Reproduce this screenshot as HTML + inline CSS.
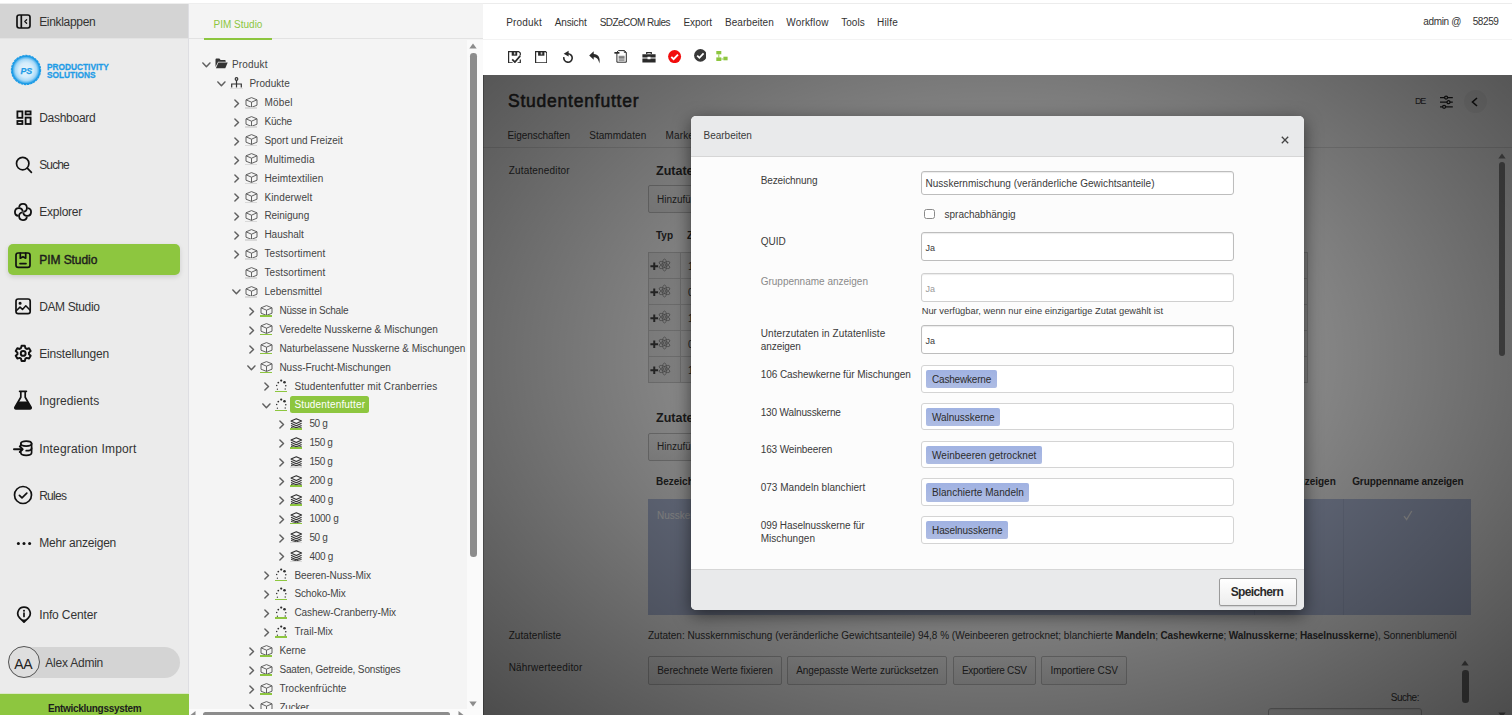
<!DOCTYPE html>
<html lang="de"><head><meta charset="utf-8"><title>PIM Studio</title>
<style>
html,body{margin:0;padding:0}
body{width:1512px;height:715px;overflow:hidden;background:#fff;font-family:"Liberation Sans",sans-serif;position:relative}
.t{position:absolute;white-space:nowrap}
.b{position:absolute;box-sizing:border-box}
.w{position:absolute;overflow:hidden}
.btn{position:absolute;box-sizing:border-box;border:1px solid #c6c6c6;border-radius:2px;background:linear-gradient(#ffffff,#f3f3f3)}
.inp{position:absolute;box-sizing:border-box;border:1px solid #bdbdbd;border-radius:3px;background:#fff;box-shadow:inset 0 1px 1px rgba(0,0,0,.08)}
.tag{position:absolute;box-sizing:border-box;border-radius:2px;background:linear-gradient(#a0b2e2,#aebce3)}
</style></head><body>

<div class="b" style="left:0px;top:3px;width:483px;height:1px;background:#eeeeee"></div>
<div class="w" id="sidebar" style="left:0;top:4px;width:188px;height:711px;background:#ebebeb">
<div class="b" style="left:0px;top:0px;width:188px;height:34px;background:#d4d4d4"></div>
<div class="b" style="left:0px;top:34px;width:188px;height:1px;background:#e3e3e3"></div>
</div>
<div class="b" style="left:188px;top:4px;width:1px;height:689px;background:#dedee2"></div>
<div class="b" style="left:189px;top:4px;width:2px;height:705px;background:#fafafa"></div>
<svg class="b" style="left:16px;top:13.5px;" width="15" height="15" viewBox="0 0 15 15"><rect x="1" y="1" width="13" height="13" rx="2.2" fill="none" stroke="#111" stroke-width="1.7"/><path d="M5.3 1v13" stroke="#111" stroke-width="1.7"/><path d="M10.6 5.8L8.8 7.5l1.8 1.7" fill="none" stroke="#111" stroke-width="1.3" stroke-linecap="round" stroke-linejoin="round"/></svg>
<div class="t" style="left:39.2px;top:12px;font-size:12px;line-height:20px;color:#333;letter-spacing:-0.32px;">Einklappen</div>
<svg class="b" style="left:10px;top:54px" width="32" height="32" viewBox="0 0 32 32">
<defs><radialGradient id="lg" cx="50%" cy="50%" r="50%"><stop offset="0" stop-color="#e8f5fd"/><stop offset="0.5" stop-color="#d3ecfb"/><stop offset="0.74" stop-color="#a5d8f7"/><stop offset="0.86" stop-color="#5ab8ef"/><stop offset="0.93" stop-color="#1f9ce6"/><stop offset="1" stop-color="#1f9ce6"/></radialGradient></defs>
<circle cx="16" cy="16" r="14.5" fill="url(#lg)" stroke="#1f9ce6" stroke-width="1.3" stroke-dasharray="2.4 0.8"/>
<text x="10.400" y="19.700" textLength="11.800" lengthAdjust="spacingAndGlyphs" font-family="Liberation Sans, sans-serif" font-size="9.900" font-weight="700" font-style="italic" fill="#1f9ce6" stroke="#1f9ce6" stroke-width=".25">PS</text>
</svg>
<div class="t" style="left:46.6px;top:59.5px;font-size:9.7px;line-height:14px;font-weight:700;color:#1f9ce6;-webkit-text-stroke:0.3px #1f9ce6;transform:scaleX(0.8585);transform-origin:0 0">PRODUCTIVITY</div>
<div class="t" style="left:46.6px;top:67.7px;font-size:9.7px;line-height:14px;font-weight:700;color:#1f9ce6;-webkit-text-stroke:0.3px #1f9ce6;transform:scaleX(0.8585);transform-origin:0 0">SOLUTIONS</div>
<div class="b" style="left:8px;top:243.5px;width:172px;height:31px;background:#8dc63f;border-radius:5px;box-shadow:0 2px 5px rgba(0,0,0,.13)"></div>
<div class="t" style="left:39.2px;top:108px;font-size:12px;line-height:20px;color:#333;letter-spacing:-0.276px;">Dashboard</div>
<svg class="b" style="left:15.5px;top:110.19999999999999px;" width="16" height="16" viewBox="0 0 16 16"><g fill="none" stroke="#111" stroke-width="1.8"><rect x="1.4" y="1.4" width="5" height="6.4"/><rect x="9.6" y="1.4" width="5" height="3"/><rect x="1.4" y="11" width="5" height="3"/><rect x="9.6" y="7.6" width="5" height="6.4"/></g></svg>
<div class="t" style="left:39.2px;top:155px;font-size:12px;line-height:20px;color:#333;letter-spacing:-0.856px;">Suche</div>
<svg class="b" style="left:15px;top:156.0px;" width="17.5" height="17.5" viewBox="0 0 17.5 17.5"><circle cx="7.7" cy="7.6" r="6.2" fill="none" stroke="#111" stroke-width="1.7" stroke-linecap="round" stroke-linejoin="round"/><path d="M12.3 12.2L16.4 16.3" fill="none" stroke="#111" stroke-width="1.7" stroke-linecap="round" stroke-linejoin="round"/></svg>
<div class="t" style="left:39.2px;top:202px;font-size:12px;line-height:20px;color:#333;letter-spacing:-0.226px;">Explorer</div>
<svg class="b" style="left:14.2px;top:202.6px;" width="18" height="18" viewBox="0 0 18 18"><g fill="none" stroke="#111" stroke-width="1.8" stroke-linecap="butt"><path transform="rotate(0 9 9)" d="M9.408 8.729A3.9 3.9 0 1 0 5.121 4.442"/><path transform="rotate(90 9 9)" d="M9.408 8.729A3.9 3.9 0 1 0 5.121 4.442"/><path transform="rotate(180 9 9)" d="M9.408 8.729A3.9 3.9 0 1 0 5.121 4.442"/><path transform="rotate(270 9 9)" d="M9.408 8.729A3.9 3.9 0 1 0 5.121 4.442"/></g></svg>
<div class="t" style="left:39.2px;top:250px;font-size:12px;line-height:20px;color:#1c1c1c;letter-spacing:-0.055px;-webkit-text-stroke:0.4px #1c1c1c;">PIM Studio</div>
<svg class="b" style="left:15.4px;top:251.60000000000002px;" width="16" height="17" viewBox="0 0 16 17"><g fill="none" stroke="#111" stroke-width="1.7" stroke-linecap="round" stroke-linejoin="round"><rect x="1" y="1" width="14" height="14.400" rx="2.200"/><path d="M5.300 1.200v5l2.700-1.500 2.700 1.500v-5"/><path d="M5 11.600h6"/></g></svg>
<div class="t" style="left:39.2px;top:297px;font-size:12px;line-height:20px;color:#333;letter-spacing:-0.37px;">DAM Studio</div>
<svg class="b" style="left:15.4px;top:298.20000000000005px;" width="16.4" height="17" viewBox="0 0 16.4 17"><g fill="none" stroke="#111" stroke-width="1.7" stroke-linecap="round" stroke-linejoin="round"><rect x="1" y="1" width="14.200" height="14.600" rx="2.200"/><path d="M1.300 12.800l3.700-3.700 2.500 2.300 3.300-3.700 4.400 4.600" stroke-width="1.500"/><circle cx="5.100" cy="5.200" r=".7" fill="#111"/></g></svg>
<div class="t" style="left:39.2px;top:344px;font-size:12px;line-height:20px;color:#333;letter-spacing:-0.171px;">Einstellungen</div>
<svg class="b" style="left:14.3px;top:344.0px;" width="18.4" height="18.4" viewBox="0 0 16 16"><g fill="none" stroke="#111" stroke-width="1.7" stroke-linecap="round" stroke-linejoin="round"><path d="M6.6 1.6h2.8l.5 2 1.2.7 2-.6 1.4 2.4-1.5 1.4v1.4l1.5 1.4-1.4 2.4-2-.6-1.2.7-.5 2H6.6l-.5-2-1.2-.7-2 .6-1.4-2.4L3 8.9V7.500L1.500 6.100l1.400-2.400 2 .6 1.200-.7z"/><circle cx="8" cy="8.2" r="2.1"/></g></svg>
<div class="t" style="left:39.2px;top:391px;font-size:12px;line-height:20px;color:#333;letter-spacing:0.063px;">Ingredients</div>
<svg class="b" style="left:13.4px;top:390.0px;" width="20" height="20" viewBox="0 0 20 20"><path d="M6.6 1.3h6.8M7.8 1.3v6L2 17.2c-.5.9 0 1.700 1 1.700h14c1 0 1.500-.8 1-1.700L12.200 7.300v-6" fill="none" stroke="#111" stroke-width="1.7" stroke-linecap="round" stroke-linejoin="round"/><path d="M5.300 11.400h9.400l3.600 6.600-.6.900H2.300l-.6-.9z" fill="#111"/></svg>
<div class="t" style="left:39.2px;top:439px;font-size:12px;line-height:20px;color:#333;letter-spacing:0.185px;">Integration Import</div>
<svg class="b" style="left:13.4px;top:440.1px;" width="20" height="16.5" viewBox="0 0 20 16.5"><g fill="none" stroke="#111" stroke-width="1.7" stroke-linecap="round" stroke-linejoin="round"><ellipse cx="13.2" cy="3.6" rx="5.400" ry="2.500"/><path d="M7.800 3.600v2.200M7.800 12.200v.6c0 1.400 2.400 2.500 5.400 2.500s5.400-1.100 5.400-2.500V3.600"/><path d="M18.600 8.200c0 1.400-2.400 2.500-5.400 2.500"/><path d="M1 9.200h8.200" stroke-width="2"/><path d="M6.800 6.400l2.800 2.800-2.800 2.800" stroke-width="2"/></g></svg>
<div class="t" style="left:39.2px;top:486px;font-size:12px;line-height:20px;color:#333;letter-spacing:-0.745px;">Rules</div>
<svg class="b" style="left:13.4px;top:485.0px;" width="20" height="20" viewBox="0 0 20 20"><g fill="none" stroke="#111" stroke-width="1.7" stroke-linecap="round" stroke-linejoin="round"><circle cx="10" cy="10" r="8.500"/><path d="M6.400 10.300l2.600 2.600 4.800-4.800"/></g></svg>
<div class="t" style="left:39.2px;top:533px;font-size:12px;line-height:20px;color:#333;letter-spacing:-0.19px;">Mehr anzeigen</div>
<svg class="b" style="left:15.5px;top:535.2px;" width="16" height="16" viewBox="0 0 16 16"><g fill="#111"><circle cx="2.400" cy="8.600" r="1.500"/><circle cx="8" cy="8.600" r="1.500"/><circle cx="13.600" cy="8.600" r="1.500"/></g></svg>
<svg class="b" style="left:15.5px;top:606px;" width="16" height="18" viewBox="0 0 16 18"><path d="M8 1.200a6.200 6.200 0 0 1 4.400 10.600L8 16.200l-4.400-4.400A6.200 6.200 0 0 1 8 1.200z" fill="none" stroke="#111" stroke-width="1.7" stroke-linecap="round" stroke-linejoin="round"/><path d="M8 7v3.400" fill="none" stroke="#111" stroke-width="1.7" stroke-linecap="round" stroke-linejoin="round"/><circle cx="8" cy="4.700" r="1" fill="#111"/><path d="M5.400 13.600h5.200L8 16.200z" fill="#111"/></svg>
<div class="t" style="left:39.2px;top:605px;font-size:12px;line-height:20px;color:#333;letter-spacing:-0.137px;">Info Center</div>
<div class="b" style="left:8px;top:646.5px;width:172px;height:31px;background:#d4d4d4;border-radius:16px"></div>
<div class="b" style="left:8px;top:646px;width:32px;height:32px;border:1px solid #555;border-radius:16px;background:#dedede"></div>
<div class="t" style="left:14.3px;top:654px;font-size:14px;line-height:20px;color:#222;letter-spacing:-0.276px;">AA</div>
<div class="t" style="left:45.3px;top:653px;font-size:12px;line-height:20px;color:#333;letter-spacing:-0.226px;">Alex Admin</div>
<div class="b" style="left:0px;top:693px;width:189px;height:1px;background:#dbe8c8"></div>
<div class="b" style="left:0px;top:694px;width:189px;height:21px;background:#8dc63f"></div>
<div class="t" style="left:47.9px;top:699px;font-size:10px;line-height:20px;color:#1c1c1c;font-weight:700;letter-spacing:-0.307px;">Entwicklungssystem</div>
<div class="w" id="treepanel" style="left:189px;top:4px;width:294px;height:711px;background:#f4f4f4">
</div>
<div class="b" style="left:189px;top:4px;width:294px;height:35.4px;background:#f4f4f4;border-bottom:1px solid #e2e2e2"></div>
<div class="t" style="left:213.5px;top:15px;font-size:10px;line-height:20px;color:#8dc63f;">PIM Studio</div>
<div class="b" style="left:203.8px;top:37.9px;width:68.2px;height:1.8px;background:#8dc63f"></div>
<svg class="b" style="left:202.0px;top:62.45px;" width="10" height="6.5" viewBox="0 0 10 6.5"><path d="M.9 .9L4.400 4.700 7.900 .9" fill="none" stroke="#606060" stroke-width="1.45" stroke-linecap="round" stroke-linejoin="round"/></svg>
<svg class="b" style="left:214.8px;top:58.24999999999999px;" width="13" height="11" viewBox="0 0 13 11"><path d="M.5 1.500c0-.5.400-.9.900-.9h3l1.200 1.300h4.200c.5 0 .9.400.9.900v.9H3.100L.5 9z" fill="#333"/><path d="M3.400 4.400h9.300L10.300 10.200H.9z" fill="#333"/></svg>
<div class="t" style="left:232.0px;top:55px;font-size:10px;line-height:20px;color:#444;letter-spacing:0.173px;">Produkt</div>
<svg class="b" style="left:217.0px;top:81.35000000000001px;" width="10" height="6.5" viewBox="0 0 10 6.5"><path d="M.9 .9L4.400 4.700 7.900 .9" fill="none" stroke="#606060" stroke-width="1.45" stroke-linecap="round" stroke-linejoin="round"/></svg>
<svg class="b" style="left:229.8px;top:77.15px;" width="13" height="12" viewBox="0 0 13 12"><g fill="none" stroke="#333" stroke-width="1.200"><circle cx="6.500" cy="2" r="1.300"/><path d="M6.500 3.400v7M1.700 10.600V7h9.600v3.600"/></g><path d="M0 11.400h13" stroke="#ddd" stroke-width="1"/></svg>
<div class="t" style="left:249.4px;top:74px;font-size:10px;line-height:20px;color:#444;letter-spacing:0.039px;">Produkte</div>
<svg class="b" style="left:234.3px;top:98.85px;" width="6.5" height="10" viewBox="0 0 6.5 10"><path d="M.9 .9L4.500 4.500 .9 8.100" fill="none" stroke="#606060" stroke-width="1.45" stroke-linecap="round" stroke-linejoin="round"/></svg>
<svg class="b" style="left:244.8px;top:96.64999999999999px;" width="13" height="11" viewBox="0 0 13 11"><g fill="none" stroke="#5a5a5a" stroke-width=".95" stroke-linejoin="round"><path d="M6.500 .6L12 2.800v5.400L6.500 10.400 1 8.200V2.800z" /><path d="M1 2.800l5.500 2.400L12 2.800M6.500 5.200v5.200"/></g></svg>
<div class="b" style="left:244.8px;top:107.1px;width:12.4px;height:1.6px;background:#d9d9d9"></div>
<div class="t" style="left:264.4px;top:93px;font-size:10px;line-height:20px;color:#444;letter-spacing:0.191px;">Möbel</div>
<svg class="b" style="left:234.3px;top:117.74999999999999px;" width="6.5" height="10" viewBox="0 0 6.5 10"><path d="M.9 .9L4.500 4.500 .9 8.100" fill="none" stroke="#606060" stroke-width="1.45" stroke-linecap="round" stroke-linejoin="round"/></svg>
<svg class="b" style="left:244.8px;top:115.54999999999998px;" width="13" height="11" viewBox="0 0 13 11"><g fill="none" stroke="#5a5a5a" stroke-width=".95" stroke-linejoin="round"><path d="M6.500 .6L12 2.800v5.400L6.500 10.400 1 8.200V2.800z" /><path d="M1 2.800l5.500 2.400L12 2.800M6.500 5.200v5.200"/></g></svg>
<div class="b" style="left:244.8px;top:125.99999999999999px;width:12.4px;height:1.6px;background:#d9d9d9"></div>
<div class="t" style="left:264.4px;top:112px;font-size:10px;line-height:20px;color:#444;letter-spacing:-0.164px;">Küche</div>
<svg class="b" style="left:234.3px;top:136.64999999999998px;" width="6.5" height="10" viewBox="0 0 6.5 10"><path d="M.9 .9L4.500 4.500 .9 8.100" fill="none" stroke="#606060" stroke-width="1.45" stroke-linecap="round" stroke-linejoin="round"/></svg>
<svg class="b" style="left:244.8px;top:134.45px;" width="13" height="11" viewBox="0 0 13 11"><g fill="none" stroke="#5a5a5a" stroke-width=".95" stroke-linejoin="round"><path d="M6.500 .6L12 2.800v5.400L6.500 10.400 1 8.200V2.800z" /><path d="M1 2.800l5.500 2.400L12 2.800M6.500 5.200v5.200"/></g></svg>
<div class="b" style="left:244.8px;top:144.89999999999998px;width:12.4px;height:1.6px;background:#d9d9d9"></div>
<div class="t" style="left:264.4px;top:131px;font-size:10px;line-height:20px;color:#444;letter-spacing:-0.031px;">Sport und Freizeit</div>
<svg class="b" style="left:234.3px;top:155.54999999999998px;" width="6.5" height="10" viewBox="0 0 6.5 10"><path d="M.9 .9L4.500 4.500 .9 8.100" fill="none" stroke="#606060" stroke-width="1.45" stroke-linecap="round" stroke-linejoin="round"/></svg>
<svg class="b" style="left:244.8px;top:153.35px;" width="13" height="11" viewBox="0 0 13 11"><g fill="none" stroke="#5a5a5a" stroke-width=".95" stroke-linejoin="round"><path d="M6.500 .6L12 2.800v5.400L6.500 10.400 1 8.200V2.800z" /><path d="M1 2.800l5.500 2.400L12 2.800M6.500 5.200v5.200"/></g></svg>
<div class="b" style="left:244.8px;top:163.79999999999998px;width:12.4px;height:1.6px;background:#d9d9d9"></div>
<div class="t" style="left:264.4px;top:150px;font-size:10px;line-height:20px;color:#444;letter-spacing:0.206px;">Multimedia</div>
<svg class="b" style="left:234.3px;top:174.45px;" width="6.5" height="10" viewBox="0 0 6.5 10"><path d="M.9 .9L4.500 4.500 .9 8.100" fill="none" stroke="#606060" stroke-width="1.45" stroke-linecap="round" stroke-linejoin="round"/></svg>
<svg class="b" style="left:244.8px;top:172.25px;" width="13" height="11" viewBox="0 0 13 11"><g fill="none" stroke="#5a5a5a" stroke-width=".95" stroke-linejoin="round"><path d="M6.500 .6L12 2.800v5.400L6.500 10.400 1 8.200V2.800z" /><path d="M1 2.800l5.500 2.400L12 2.800M6.500 5.200v5.200"/></g></svg>
<div class="b" style="left:244.8px;top:182.7px;width:12.4px;height:1.6px;background:#d9d9d9"></div>
<div class="t" style="left:264.4px;top:169px;font-size:10px;line-height:20px;color:#444;letter-spacing:0.138px;">Heimtextilien</div>
<svg class="b" style="left:234.3px;top:193.34999999999997px;" width="6.5" height="10" viewBox="0 0 6.5 10"><path d="M.9 .9L4.500 4.500 .9 8.100" fill="none" stroke="#606060" stroke-width="1.45" stroke-linecap="round" stroke-linejoin="round"/></svg>
<svg class="b" style="left:244.8px;top:191.14999999999998px;" width="13" height="11" viewBox="0 0 13 11"><g fill="none" stroke="#5a5a5a" stroke-width=".95" stroke-linejoin="round"><path d="M6.500 .6L12 2.800v5.400L6.500 10.400 1 8.200V2.800z" /><path d="M1 2.800l5.500 2.400L12 2.800M6.500 5.200v5.200"/></g></svg>
<div class="b" style="left:244.8px;top:201.59999999999997px;width:12.4px;height:1.6px;background:#d9d9d9"></div>
<div class="t" style="left:264.4px;top:188px;font-size:10px;line-height:20px;color:#444;letter-spacing:0.123px;">Kinderwelt</div>
<svg class="b" style="left:234.3px;top:212.24999999999997px;" width="6.5" height="10" viewBox="0 0 6.5 10"><path d="M.9 .9L4.500 4.500 .9 8.100" fill="none" stroke="#606060" stroke-width="1.45" stroke-linecap="round" stroke-linejoin="round"/></svg>
<svg class="b" style="left:244.8px;top:210.04999999999998px;" width="13" height="11" viewBox="0 0 13 11"><g fill="none" stroke="#5a5a5a" stroke-width=".95" stroke-linejoin="round"><path d="M6.500 .6L12 2.800v5.400L6.500 10.400 1 8.200V2.800z" /><path d="M1 2.800l5.500 2.400L12 2.800M6.500 5.200v5.200"/></g></svg>
<div class="b" style="left:244.8px;top:220.49999999999997px;width:12.4px;height:1.6px;background:#d9d9d9"></div>
<div class="t" style="left:264.4px;top:206px;font-size:10px;line-height:20px;color:#444;letter-spacing:-0.029px;">Reinigung</div>
<svg class="b" style="left:234.3px;top:231.14999999999998px;" width="6.5" height="10" viewBox="0 0 6.5 10"><path d="M.9 .9L4.500 4.500 .9 8.100" fill="none" stroke="#606060" stroke-width="1.45" stroke-linecap="round" stroke-linejoin="round"/></svg>
<svg class="b" style="left:244.8px;top:228.95px;" width="13" height="11" viewBox="0 0 13 11"><g fill="none" stroke="#5a5a5a" stroke-width=".95" stroke-linejoin="round"><path d="M6.500 .6L12 2.800v5.400L6.500 10.400 1 8.200V2.800z" /><path d="M1 2.800l5.500 2.400L12 2.800M6.500 5.200v5.200"/></g></svg>
<div class="b" style="left:244.8px;top:239.39999999999998px;width:12.4px;height:1.6px;background:#d9d9d9"></div>
<div class="t" style="left:264.4px;top:225px;font-size:10px;line-height:20px;color:#444;letter-spacing:-0.024px;">Haushalt</div>
<svg class="b" style="left:234.3px;top:250.05px;" width="6.5" height="10" viewBox="0 0 6.5 10"><path d="M.9 .9L4.500 4.500 .9 8.100" fill="none" stroke="#606060" stroke-width="1.45" stroke-linecap="round" stroke-linejoin="round"/></svg>
<svg class="b" style="left:244.8px;top:247.85000000000002px;" width="13" height="11" viewBox="0 0 13 11"><g fill="none" stroke="#5a5a5a" stroke-width=".95" stroke-linejoin="round"><path d="M6.500 .6L12 2.800v5.400L6.500 10.400 1 8.200V2.800z" /><path d="M1 2.800l5.500 2.400L12 2.800M6.500 5.200v5.200"/></g></svg>
<div class="b" style="left:244.8px;top:258.3px;width:12.4px;height:1.6px;background:#d9d9d9"></div>
<div class="t" style="left:264.4px;top:244px;font-size:10px;line-height:20px;color:#444;letter-spacing:0.12px;">Testsortiment</div>
<svg class="b" style="left:244.8px;top:266.75px;" width="13" height="11" viewBox="0 0 13 11"><g fill="none" stroke="#5a5a5a" stroke-width=".95" stroke-linejoin="round"><path d="M6.500 .6L12 2.800v5.400L6.500 10.400 1 8.200V2.800z" /><path d="M1 2.800l5.500 2.400L12 2.800M6.500 5.200v5.200"/></g></svg>
<div class="b" style="left:244.8px;top:277.2px;width:12.4px;height:1.6px;background:#d9d9d9"></div>
<div class="t" style="left:264.4px;top:263px;font-size:10px;line-height:20px;color:#444;letter-spacing:0.12px;">Testsortiment</div>
<svg class="b" style="left:232.0px;top:289.24999999999994px;" width="10" height="6.5" viewBox="0 0 10 6.5"><path d="M.9 .9L4.400 4.700 7.900 .9" fill="none" stroke="#606060" stroke-width="1.45" stroke-linecap="round" stroke-linejoin="round"/></svg>
<svg class="b" style="left:244.8px;top:285.65px;" width="13" height="11" viewBox="0 0 13 11"><g fill="none" stroke="#5a5a5a" stroke-width=".95" stroke-linejoin="round"><path d="M6.500 .6L12 2.800v5.400L6.500 10.400 1 8.200V2.800z" /><path d="M1 2.800l5.500 2.400L12 2.800M6.500 5.200v5.200"/></g></svg>
<div class="b" style="left:244.8px;top:296.09999999999997px;width:12.4px;height:1.6px;background:#d9d9d9"></div>
<div class="t" style="left:264.4px;top:282px;font-size:10px;line-height:20px;color:#444;letter-spacing:0.082px;">Lebensmittel</div>
<svg class="b" style="left:249.3px;top:306.74999999999994px;" width="6.5" height="10" viewBox="0 0 6.5 10"><path d="M.9 .9L4.500 4.500 .9 8.100" fill="none" stroke="#606060" stroke-width="1.45" stroke-linecap="round" stroke-linejoin="round"/></svg>
<svg class="b" style="left:259.8px;top:304.54999999999995px;" width="13" height="11" viewBox="0 0 13 11"><g fill="none" stroke="#5a5a5a" stroke-width=".95" stroke-linejoin="round"><path d="M6.500 .6L12 2.800v5.400L6.500 10.400 1 8.200V2.800z" /><path d="M1 2.800l5.500 2.400L12 2.800M6.500 5.200v5.200"/></g></svg>
<div class="b" style="left:259.8px;top:314.99999999999994px;width:12.4px;height:1.6px;background:#8dc63f"></div>
<div class="t" style="left:279.4px;top:301px;font-size:10px;line-height:20px;color:#444;letter-spacing:-0.226px;">Nüsse in Schale</div>
<svg class="b" style="left:249.3px;top:325.6499999999999px;" width="6.5" height="10" viewBox="0 0 6.5 10"><path d="M.9 .9L4.500 4.500 .9 8.100" fill="none" stroke="#606060" stroke-width="1.45" stroke-linecap="round" stroke-linejoin="round"/></svg>
<svg class="b" style="left:259.8px;top:323.44999999999993px;" width="13" height="11" viewBox="0 0 13 11"><g fill="none" stroke="#5a5a5a" stroke-width=".95" stroke-linejoin="round"><path d="M6.500 .6L12 2.800v5.400L6.500 10.400 1 8.200V2.800z" /><path d="M1 2.800l5.500 2.400L12 2.800M6.500 5.200v5.200"/></g></svg>
<div class="b" style="left:259.8px;top:333.8999999999999px;width:12.4px;height:1.6px;background:#8dc63f"></div>
<div class="t" style="left:279.4px;top:320px;font-size:10px;line-height:20px;color:#444;letter-spacing:-0.019px;">Veredelte Nusskerne &amp; Mischungen</div>
<svg class="b" style="left:249.3px;top:344.55px;" width="6.5" height="10" viewBox="0 0 6.5 10"><path d="M.9 .9L4.500 4.500 .9 8.100" fill="none" stroke="#606060" stroke-width="1.45" stroke-linecap="round" stroke-linejoin="round"/></svg>
<svg class="b" style="left:259.8px;top:342.35px;" width="13" height="11" viewBox="0 0 13 11"><g fill="none" stroke="#5a5a5a" stroke-width=".95" stroke-linejoin="round"><path d="M6.500 .6L12 2.800v5.400L6.500 10.400 1 8.200V2.800z" /><path d="M1 2.800l5.500 2.400L12 2.800M6.500 5.200v5.200"/></g></svg>
<div class="b" style="left:259.8px;top:352.8px;width:12.4px;height:1.6px;background:#8dc63f"></div>
<div class="t" style="left:279.4px;top:339px;font-size:10px;line-height:20px;color:#444;letter-spacing:-0.021px;">Naturbelassene Nusskerne &amp; Mischungen</div>
<svg class="b" style="left:247.0px;top:364.84999999999997px;" width="10" height="6.5" viewBox="0 0 10 6.5"><path d="M.9 .9L4.400 4.700 7.900 .9" fill="none" stroke="#606060" stroke-width="1.45" stroke-linecap="round" stroke-linejoin="round"/></svg>
<svg class="b" style="left:259.8px;top:361.25px;" width="13" height="11" viewBox="0 0 13 11"><g fill="none" stroke="#5a5a5a" stroke-width=".95" stroke-linejoin="round"><path d="M6.500 .6L12 2.800v5.400L6.500 10.400 1 8.200V2.800z" /><path d="M1 2.800l5.500 2.400L12 2.800M6.500 5.200v5.200"/></g></svg>
<div class="b" style="left:259.8px;top:371.7px;width:12.4px;height:1.6px;background:#8dc63f"></div>
<div class="t" style="left:279.4px;top:358px;font-size:10px;line-height:20px;color:#444;letter-spacing:-0.01px;">Nuss-Frucht-Mischungen</div>
<svg class="b" style="left:264.3px;top:382.34999999999997px;" width="6.5" height="10" viewBox="0 0 6.5 10"><path d="M.9 .9L4.500 4.500 .9 8.100" fill="none" stroke="#606060" stroke-width="1.45" stroke-linecap="round" stroke-linejoin="round"/></svg>
<svg class="b" style="left:274.8px;top:379.15px;" width="13" height="12" viewBox="0 0 13 12"><g fill="#2e2e2e"><circle cx="6.200" cy="1.600" r="1.100"/><circle cx="9.500" cy="3.300" r="1.300"/><circle cx="3.300" cy="3.600" r=".9"/><circle cx="10.800" cy="6.800" r=".8"/><circle cx="1.700" cy="6.600" r=".75"/><circle cx="10.200" cy="10" r=".65"/><circle cx="2.400" cy="10.200" r=".65"/></g></svg>
<div class="b" style="left:274.8px;top:390.59999999999997px;width:12.4px;height:1.6px;background:#8dc63f"></div>
<div class="t" style="left:294.4px;top:377px;font-size:10px;line-height:20px;color:#444;letter-spacing:0.11px;">Studentenfutter mit Cranberries</div>
<svg class="b" style="left:262.0px;top:402.6499999999999px;" width="10" height="6.5" viewBox="0 0 10 6.5"><path d="M.9 .9L4.400 4.700 7.900 .9" fill="none" stroke="#606060" stroke-width="1.45" stroke-linecap="round" stroke-linejoin="round"/></svg>
<svg class="b" style="left:274.8px;top:398.04999999999995px;" width="13" height="12" viewBox="0 0 13 12"><g fill="#2e2e2e"><circle cx="6.200" cy="1.600" r="1.100"/><circle cx="9.500" cy="3.300" r="1.300"/><circle cx="3.300" cy="3.600" r=".9"/><circle cx="10.800" cy="6.800" r=".8"/><circle cx="1.700" cy="6.600" r=".75"/><circle cx="10.200" cy="10" r=".65"/><circle cx="2.400" cy="10.200" r=".65"/></g></svg>
<div class="b" style="left:274.8px;top:409.49999999999994px;width:12.4px;height:1.6px;background:#8dc63f"></div>
<div class="b" style="left:290.4px;top:396.3px;width:78.8px;height:16.4px;background:#8dc63f;border-radius:2.500px"></div>
<div class="t" style="left:294.4px;top:395px;font-size:10px;line-height:20px;color:#fff;letter-spacing:0.158px;">Studentenfutter</div>
<svg class="b" style="left:279.3px;top:420.1499999999999px;" width="6.5" height="10" viewBox="0 0 6.5 10"><path d="M.9 .9L4.500 4.500 .9 8.100" fill="none" stroke="#606060" stroke-width="1.45" stroke-linecap="round" stroke-linejoin="round"/></svg>
<svg class="b" style="left:289.8px;top:417.94999999999993px;" width="13" height="11" viewBox="0 0 13 11"><g fill="none" stroke="#2e2e2e" stroke-width="1.050" stroke-linejoin="round"><path d="M6.300 .7L11.600 3.100 6.300 5.500 1 3.100z"/><path d="M1 5.300l5.300 2.400 5.300-2.400"/><path d="M1 7.400l5.300 2.400 5.300-2.400"/><path d="M1 9.400l5.300 1.400 5.300-1.400" stroke-width=".9"/></g></svg>
<div class="b" style="left:289.8px;top:428.3999999999999px;width:12.4px;height:1.6px;background:#8dc63f"></div>
<div class="t" style="left:309.4px;top:414px;font-size:10px;line-height:20px;color:#444;letter-spacing:-0.354px;">50 g</div>
<svg class="b" style="left:279.3px;top:439.05px;" width="6.5" height="10" viewBox="0 0 6.5 10"><path d="M.9 .9L4.500 4.500 .9 8.100" fill="none" stroke="#606060" stroke-width="1.45" stroke-linecap="round" stroke-linejoin="round"/></svg>
<svg class="b" style="left:289.8px;top:436.85px;" width="13" height="11" viewBox="0 0 13 11"><g fill="none" stroke="#2e2e2e" stroke-width="1.050" stroke-linejoin="round"><path d="M6.300 .7L11.600 3.100 6.300 5.500 1 3.100z"/><path d="M1 5.300l5.300 2.400 5.300-2.400"/><path d="M1 7.400l5.300 2.400 5.300-2.400"/><path d="M1 9.400l5.300 1.400 5.300-1.400" stroke-width=".9"/></g></svg>
<div class="b" style="left:289.8px;top:447.3px;width:12.4px;height:1.6px;background:#8dc63f"></div>
<div class="t" style="left:309.4px;top:433px;font-size:10px;line-height:20px;color:#444;letter-spacing:-0.381px;">150 g</div>
<svg class="b" style="left:279.3px;top:457.95px;" width="6.5" height="10" viewBox="0 0 6.5 10"><path d="M.9 .9L4.500 4.500 .9 8.100" fill="none" stroke="#606060" stroke-width="1.45" stroke-linecap="round" stroke-linejoin="round"/></svg>
<svg class="b" style="left:289.8px;top:455.75px;" width="13" height="11" viewBox="0 0 13 11"><g fill="none" stroke="#2e2e2e" stroke-width="1.050" stroke-linejoin="round"><path d="M6.300 .7L11.600 3.100 6.300 5.500 1 3.100z"/><path d="M1 5.300l5.300 2.400 5.300-2.400"/><path d="M1 7.400l5.300 2.400 5.300-2.400"/><path d="M1 9.400l5.300 1.400 5.300-1.400" stroke-width=".9"/></g></svg>
<div class="b" style="left:289.8px;top:466.2px;width:12.4px;height:1.6px;background:#d9d9d9"></div>
<div class="t" style="left:309.4px;top:452px;font-size:10px;line-height:20px;color:#444;letter-spacing:-0.381px;">150 g</div>
<svg class="b" style="left:279.3px;top:476.84999999999997px;" width="6.5" height="10" viewBox="0 0 6.5 10"><path d="M.9 .9L4.500 4.500 .9 8.100" fill="none" stroke="#606060" stroke-width="1.45" stroke-linecap="round" stroke-linejoin="round"/></svg>
<svg class="b" style="left:289.8px;top:474.65px;" width="13" height="11" viewBox="0 0 13 11"><g fill="none" stroke="#2e2e2e" stroke-width="1.050" stroke-linejoin="round"><path d="M6.300 .7L11.600 3.100 6.300 5.500 1 3.100z"/><path d="M1 5.300l5.300 2.400 5.300-2.400"/><path d="M1 7.400l5.300 2.400 5.300-2.400"/><path d="M1 9.400l5.300 1.400 5.300-1.400" stroke-width=".9"/></g></svg>
<div class="b" style="left:289.8px;top:485.09999999999997px;width:12.4px;height:1.6px;background:#8dc63f"></div>
<div class="t" style="left:309.4px;top:471px;font-size:10px;line-height:20px;color:#444;letter-spacing:-0.381px;">200 g</div>
<svg class="b" style="left:279.3px;top:495.74999999999994px;" width="6.5" height="10" viewBox="0 0 6.5 10"><path d="M.9 .9L4.500 4.500 .9 8.100" fill="none" stroke="#606060" stroke-width="1.45" stroke-linecap="round" stroke-linejoin="round"/></svg>
<svg class="b" style="left:289.8px;top:493.54999999999995px;" width="13" height="11" viewBox="0 0 13 11"><g fill="none" stroke="#2e2e2e" stroke-width="1.050" stroke-linejoin="round"><path d="M6.300 .7L11.600 3.100 6.300 5.500 1 3.100z"/><path d="M1 5.300l5.300 2.400 5.300-2.400"/><path d="M1 7.400l5.300 2.400 5.300-2.400"/><path d="M1 9.400l5.300 1.400 5.300-1.400" stroke-width=".9"/></g></svg>
<div class="b" style="left:289.8px;top:503.99999999999994px;width:12.4px;height:1.6px;background:#8dc63f"></div>
<div class="t" style="left:309.4px;top:490px;font-size:10px;line-height:20px;color:#444;letter-spacing:-0.306px;">400 g</div>
<svg class="b" style="left:279.3px;top:514.65px;" width="6.5" height="10" viewBox="0 0 6.5 10"><path d="M.9 .9L4.500 4.500 .9 8.100" fill="none" stroke="#606060" stroke-width="1.45" stroke-linecap="round" stroke-linejoin="round"/></svg>
<svg class="b" style="left:289.8px;top:512.4499999999999px;" width="13" height="11" viewBox="0 0 13 11"><g fill="none" stroke="#2e2e2e" stroke-width="1.050" stroke-linejoin="round"><path d="M6.300 .7L11.600 3.100 6.300 5.500 1 3.100z"/><path d="M1 5.300l5.300 2.400 5.300-2.400"/><path d="M1 7.400l5.300 2.400 5.300-2.400"/><path d="M1 9.400l5.300 1.400 5.300-1.400" stroke-width=".9"/></g></svg>
<div class="b" style="left:289.8px;top:522.9px;width:12.4px;height:1.6px;background:#8dc63f"></div>
<div class="t" style="left:309.4px;top:509px;font-size:10px;line-height:20px;color:#444;letter-spacing:-0.257px;">1000 g</div>
<svg class="b" style="left:279.3px;top:533.55px;" width="6.5" height="10" viewBox="0 0 6.5 10"><path d="M.9 .9L4.500 4.500 .9 8.100" fill="none" stroke="#606060" stroke-width="1.45" stroke-linecap="round" stroke-linejoin="round"/></svg>
<svg class="b" style="left:289.8px;top:531.3499999999999px;" width="13" height="11" viewBox="0 0 13 11"><g fill="none" stroke="#2e2e2e" stroke-width="1.050" stroke-linejoin="round"><path d="M6.300 .7L11.600 3.100 6.300 5.500 1 3.100z"/><path d="M1 5.300l5.300 2.400 5.300-2.400"/><path d="M1 7.400l5.300 2.400 5.300-2.400"/><path d="M1 9.400l5.300 1.400 5.300-1.400" stroke-width=".9"/></g></svg>
<div class="b" style="left:289.8px;top:541.8px;width:12.4px;height:1.6px;background:#d9d9d9"></div>
<div class="t" style="left:309.4px;top:528px;font-size:10px;line-height:20px;color:#444;letter-spacing:-0.354px;">50 g</div>
<svg class="b" style="left:279.3px;top:552.45px;" width="6.5" height="10" viewBox="0 0 6.5 10"><path d="M.9 .9L4.500 4.500 .9 8.100" fill="none" stroke="#606060" stroke-width="1.45" stroke-linecap="round" stroke-linejoin="round"/></svg>
<svg class="b" style="left:289.8px;top:550.25px;" width="13" height="11" viewBox="0 0 13 11"><g fill="none" stroke="#2e2e2e" stroke-width="1.050" stroke-linejoin="round"><path d="M6.300 .7L11.600 3.100 6.300 5.500 1 3.100z"/><path d="M1 5.300l5.300 2.400 5.300-2.400"/><path d="M1 7.400l5.300 2.400 5.300-2.400"/><path d="M1 9.400l5.300 1.400 5.300-1.400" stroke-width=".9"/></g></svg>
<div class="b" style="left:289.8px;top:560.7px;width:12.4px;height:1.6px;background:#d9d9d9"></div>
<div class="t" style="left:309.4px;top:547px;font-size:10px;line-height:20px;color:#444;letter-spacing:-0.306px;">400 g</div>
<svg class="b" style="left:264.3px;top:571.35px;" width="6.5" height="10" viewBox="0 0 6.5 10"><path d="M.9 .9L4.500 4.500 .9 8.100" fill="none" stroke="#606060" stroke-width="1.45" stroke-linecap="round" stroke-linejoin="round"/></svg>
<svg class="b" style="left:274.8px;top:568.15px;" width="13" height="12" viewBox="0 0 13 12"><g fill="#2e2e2e"><circle cx="6.200" cy="1.600" r="1.100"/><circle cx="9.500" cy="3.300" r="1.300"/><circle cx="3.300" cy="3.600" r=".9"/><circle cx="10.800" cy="6.800" r=".8"/><circle cx="1.700" cy="6.600" r=".75"/><circle cx="10.200" cy="10" r=".65"/><circle cx="2.400" cy="10.200" r=".65"/></g></svg>
<div class="b" style="left:274.8px;top:579.6px;width:12.4px;height:1.6px;background:#8dc63f"></div>
<div class="t" style="left:294.4px;top:566px;font-size:10px;line-height:20px;color:#444;letter-spacing:-0.053px;">Beeren-Nuss-Mix</div>
<svg class="b" style="left:264.3px;top:590.25px;" width="6.5" height="10" viewBox="0 0 6.5 10"><path d="M.9 .9L4.500 4.500 .9 8.100" fill="none" stroke="#606060" stroke-width="1.45" stroke-linecap="round" stroke-linejoin="round"/></svg>
<svg class="b" style="left:274.8px;top:587.05px;" width="13" height="12" viewBox="0 0 13 12"><g fill="#2e2e2e"><circle cx="6.200" cy="1.600" r="1.100"/><circle cx="9.500" cy="3.300" r="1.300"/><circle cx="3.300" cy="3.600" r=".9"/><circle cx="10.800" cy="6.800" r=".8"/><circle cx="1.700" cy="6.600" r=".75"/><circle cx="10.200" cy="10" r=".65"/><circle cx="2.400" cy="10.200" r=".65"/></g></svg>
<div class="b" style="left:274.8px;top:598.5px;width:12.4px;height:1.6px;background:#8dc63f"></div>
<div class="t" style="left:294.4px;top:584px;font-size:10px;line-height:20px;color:#444;letter-spacing:-0.104px;">Schoko-Mix</div>
<svg class="b" style="left:264.3px;top:609.15px;" width="6.5" height="10" viewBox="0 0 6.5 10"><path d="M.9 .9L4.500 4.500 .9 8.100" fill="none" stroke="#606060" stroke-width="1.45" stroke-linecap="round" stroke-linejoin="round"/></svg>
<svg class="b" style="left:274.8px;top:605.9499999999999px;" width="13" height="12" viewBox="0 0 13 12"><g fill="#2e2e2e"><circle cx="6.200" cy="1.600" r="1.100"/><circle cx="9.500" cy="3.300" r="1.300"/><circle cx="3.300" cy="3.600" r=".9"/><circle cx="10.800" cy="6.800" r=".8"/><circle cx="1.700" cy="6.600" r=".75"/><circle cx="10.200" cy="10" r=".65"/><circle cx="2.400" cy="10.200" r=".65"/></g></svg>
<div class="b" style="left:274.8px;top:617.4px;width:12.4px;height:1.6px;background:#8dc63f"></div>
<div class="t" style="left:294.4px;top:603px;font-size:10px;line-height:20px;color:#444;letter-spacing:-0.058px;">Cashew-Cranberry-Mix</div>
<svg class="b" style="left:264.3px;top:628.0500000000001px;" width="6.5" height="10" viewBox="0 0 6.5 10"><path d="M.9 .9L4.500 4.500 .9 8.100" fill="none" stroke="#606060" stroke-width="1.45" stroke-linecap="round" stroke-linejoin="round"/></svg>
<svg class="b" style="left:274.8px;top:624.85px;" width="13" height="12" viewBox="0 0 13 12"><g fill="#2e2e2e"><circle cx="6.200" cy="1.600" r="1.100"/><circle cx="9.500" cy="3.300" r="1.300"/><circle cx="3.300" cy="3.600" r=".9"/><circle cx="10.800" cy="6.800" r=".8"/><circle cx="1.700" cy="6.600" r=".75"/><circle cx="10.200" cy="10" r=".65"/><circle cx="2.400" cy="10.200" r=".65"/></g></svg>
<div class="b" style="left:274.8px;top:636.3000000000001px;width:12.4px;height:1.6px;background:#8dc63f"></div>
<div class="t" style="left:294.4px;top:622px;font-size:10px;line-height:20px;color:#444;letter-spacing:0.056px;">Trail-Mix</div>
<svg class="b" style="left:249.3px;top:646.95px;" width="6.5" height="10" viewBox="0 0 6.5 10"><path d="M.9 .9L4.500 4.500 .9 8.100" fill="none" stroke="#606060" stroke-width="1.45" stroke-linecap="round" stroke-linejoin="round"/></svg>
<svg class="b" style="left:259.8px;top:644.75px;" width="13" height="11" viewBox="0 0 13 11"><g fill="none" stroke="#5a5a5a" stroke-width=".95" stroke-linejoin="round"><path d="M6.500 .6L12 2.800v5.400L6.500 10.400 1 8.200V2.800z" /><path d="M1 2.800l5.500 2.400L12 2.800M6.500 5.200v5.200"/></g></svg>
<div class="b" style="left:259.8px;top:655.2px;width:12.4px;height:1.6px;background:#8dc63f"></div>
<div class="t" style="left:279.4px;top:641px;font-size:10px;line-height:20px;color:#444;letter-spacing:-0.071px;">Kerne</div>
<svg class="b" style="left:249.3px;top:665.85px;" width="6.5" height="10" viewBox="0 0 6.5 10"><path d="M.9 .9L4.500 4.500 .9 8.100" fill="none" stroke="#606060" stroke-width="1.45" stroke-linecap="round" stroke-linejoin="round"/></svg>
<svg class="b" style="left:259.8px;top:663.65px;" width="13" height="11" viewBox="0 0 13 11"><g fill="none" stroke="#5a5a5a" stroke-width=".95" stroke-linejoin="round"><path d="M6.500 .6L12 2.800v5.400L6.500 10.400 1 8.200V2.800z" /><path d="M1 2.800l5.500 2.400L12 2.800M6.500 5.200v5.200"/></g></svg>
<div class="b" style="left:259.8px;top:674.1px;width:12.4px;height:1.6px;background:#8dc63f"></div>
<div class="t" style="left:279.4px;top:660px;font-size:10px;line-height:20px;color:#444;letter-spacing:-0.149px;">Saaten, Getreide, Sonstiges</div>
<svg class="b" style="left:249.3px;top:684.75px;" width="6.5" height="10" viewBox="0 0 6.5 10"><path d="M.9 .9L4.500 4.500 .9 8.100" fill="none" stroke="#606060" stroke-width="1.45" stroke-linecap="round" stroke-linejoin="round"/></svg>
<svg class="b" style="left:259.8px;top:682.55px;" width="13" height="11" viewBox="0 0 13 11"><g fill="none" stroke="#5a5a5a" stroke-width=".95" stroke-linejoin="round"><path d="M6.500 .6L12 2.800v5.400L6.500 10.400 1 8.200V2.800z" /><path d="M1 2.800l5.500 2.400L12 2.800M6.500 5.200v5.200"/></g></svg>
<div class="b" style="left:259.8px;top:693.0px;width:12.4px;height:1.6px;background:#8dc63f"></div>
<div class="t" style="left:279.4px;top:679px;font-size:10px;line-height:20px;color:#444;letter-spacing:0.052px;">Trockenfrüchte</div>
<svg class="b" style="left:249.3px;top:703.65px;" width="6.5" height="10" viewBox="0 0 6.5 10"><path d="M.9 .9L4.500 4.500 .9 8.100" fill="none" stroke="#606060" stroke-width="1.45" stroke-linecap="round" stroke-linejoin="round"/></svg>
<svg class="b" style="left:259.8px;top:701.4499999999999px;" width="13" height="11" viewBox="0 0 13 11"><g fill="none" stroke="#5a5a5a" stroke-width=".95" stroke-linejoin="round"><path d="M6.500 .6L12 2.800v5.400L6.500 10.400 1 8.200V2.800z" /><path d="M1 2.800l5.500 2.400L12 2.800M6.500 5.200v5.200"/></g></svg>
<div class="b" style="left:259.8px;top:711.9px;width:12.4px;height:1.6px;background:#8dc63f"></div>
<div class="t" style="left:279.4px;top:698px;font-size:10px;line-height:20px;color:#444;letter-spacing:-0.192px;">Zucker</div>
<div class="b" style="left:467px;top:40px;width:16px;height:675px;background:#fafafa"></div>
<div class="b" style="left:470px;top:53px;width:6.6px;height:504px;background:#8c8c8c;border-radius:3.3px"></div>
<svg class="b" style="left:469.3px;top:42.8px;" width="8" height="6" viewBox="0 0 8 6"><path d="M0.300 5.500L4 0.500l3.700 5z" fill="#8c8c8c"/></svg>
<svg class="b" style="left:469.3px;top:701px;" width="8" height="6" viewBox="0 0 8 6"><path d="M0.300 .5L4 5.500 7.700 .5z" fill="#8c8c8c"/></svg>
<div class="b" style="left:189px;top:709.3px;width:294px;height:6px;background:#fbfbfb"></div>
<div class="b" style="left:203px;top:711.5px;width:246.5px;height:5px;background:#8c8c8c;border-radius:2.5px"></div>
<svg class="b" style="left:189.5px;top:710.5px;" width="6" height="6" viewBox="0 0 6 6"><path d="M5.500 0L.5 4l5 4z" fill="#8c8c8c"/></svg>
<svg class="b" style="left:458px;top:710.5px;" width="6" height="6" viewBox="0 0 6 6"><path d="M.5 0l5 4-5 4z" fill="#8c8c8c"/></svg>
<div class="b" style="left:483px;top:3px;width:1029px;height:1px;background:#ececec"></div>
<div class="b" style="left:483px;top:38.5px;width:1029px;height:1px;background:#f3f3f3"></div>
<div class="t" style="left:506.2px;top:13px;font-size:10px;line-height:20px;color:#333;letter-spacing:0.173px;">Produkt</div>
<div class="t" style="left:554.7px;top:13px;font-size:10px;line-height:20px;color:#333;letter-spacing:-0.132px;">Ansicht</div>
<div class="t" style="left:599.7px;top:13px;font-size:10px;line-height:20px;color:#333;letter-spacing:-0.541px;">SDZeCOM Rules</div>
<div class="t" style="left:683.4px;top:13px;font-size:10px;line-height:20px;color:#333;letter-spacing:-0.03px;">Export</div>
<div class="t" style="left:725px;top:13px;font-size:10px;line-height:20px;color:#333;letter-spacing:0.042px;">Bearbeiten</div>
<div class="t" style="left:786.2px;top:13px;font-size:10px;line-height:20px;color:#333;letter-spacing:0.188px;">Workflow</div>
<div class="t" style="left:841.2px;top:13px;font-size:10px;line-height:20px;color:#333;letter-spacing:0.039px;">Tools</div>
<div class="t" style="left:877px;top:13px;font-size:10px;line-height:20px;color:#333;letter-spacing:0.199px;">Hilfe</div>
<div class="t" style="left:1423.2px;top:12px;font-size:10px;line-height:20px;color:#333;letter-spacing:-0.328px;">admin @</div>
<div class="t" style="left:1472.7px;top:12px;font-size:10px;line-height:20px;color:#333;letter-spacing:-0.402px;">58259</div>
<svg class="b" style="left:507.9px;top:50.7px;" width="13" height="12.6" viewBox="0 0 13 12.6"><path d="M.6 11.900V.6H10.700L12.300 2.100V4.500M12.300 8.600V11.900H9.600M.6 11.900H4.600" fill="none" stroke="#2a2a2a" stroke-width="1.200"/><rect x="3.700" y=".6" width="5.500" height="4.100" fill="#2a2a2a"/><rect x="5.900" y="1.300" width="1.500" height="2.200" fill="#ccc"/><path d="M4.200 8.300l2.700 2.800 5.300-6.200" fill="none" stroke="#2a2a2a" stroke-width="1.700"/></svg>
<svg class="b" style="left:534.9px;top:50.7px;" width="12.4" height="12.6" viewBox="0 0 12.4 12.6"><path d="M.6 .6H10.600L11.800 1.800V11.900H.6z" fill="none" stroke="#2a2a2a" stroke-width="1.200"/><rect x="3.100" y=".6" width="6.300" height="4.100" fill="#2a2a2a"/><rect x="5.700" y="1.300" width="1.600" height="2.200" fill="#ccc"/></svg>
<svg class="b" style="left:562.3px;top:49.9px;" width="11.5" height="13" viewBox="0 0 11.5 13"><path d="M6 3.800A4.200 4.200 0 1 1 1.900 7.100" fill="none" stroke="#2a2a2a" stroke-width="1.600"/><path d="M1.700 3.700L6.600 .7v5.800z" fill="#2a2a2a"/></svg>
<svg class="b" style="left:589.1px;top:50.5px;" width="12.4" height="13.4" viewBox="0 0 12.4 13.4"><path transform="scale(1.07)" d="M4.400 .2L.2 4.300l4.200 4V5.900c2.500 0 4.300 1.300 5.300 5.700C10.900 6.200 8.600 3.200 4.400 2.900z" fill="#2a2a2a"/></svg>
<svg class="b" style="left:613.9px;top:50.2px;" width="13" height="13" viewBox="0 0 13 13"><path d="M4.500 .6h5.900l1.900 1.800v9.800H2.900V2.200z" fill="none" stroke="#2a2a2a" stroke-width="1"/><path d="M10.300 .7v1.800h1.900" fill="none" stroke="#2a2a2a" stroke-width=".8"/><rect x=".4" y="2" width="5" height="1.700" fill="#2a2a2a"/><g stroke="#555" stroke-width=".85"><path d="M4.600 6.300h6M4.600 7.600h6M4.600 8.900h6M4.600 10.200h6"/></g></svg>
<svg class="b" style="left:641.5px;top:52px;" width="14" height="11" viewBox="0 0 14 11"><path d="M4.700 2V.7h4.600V2" fill="none" stroke="#2a2a2a" stroke-width="1.200"/><path d="M.4 2.300h13.200v3.300H8.500v-.8H5.500v.8H.4z" fill="#2a2a2a"/><path d="M.4 6.400h5.100v.9h3V6.400h5.100v4.100H.4z" fill="#2a2a2a"/></svg>
<svg class="b" style="left:668.4px;top:50.2px;" width="13.2" height="13.2" viewBox="0 0 13.2 13.2"><circle cx="6.600" cy="6.600" r="6.500" fill="#f20d0d"/><path d="M3.300 6.900l2.300 2.300 4.400-4.600" fill="none" stroke="#fff" stroke-width="1.900"/></svg>
<svg class="b" style="left:693.6px;top:49px;" width="12.8" height="12.8" viewBox="0 0 12.8 12.8"><circle cx="6.400" cy="6.400" r="6.300" fill="#383838"/><path d="M3.200 6.600l2.200 2.200 4.200-4.400" fill="none" stroke="#fff" stroke-width="1.800"/></svg>
<svg class="b" style="left:716.2px;top:51.4px;" width="12" height="11" viewBox="0 0 12 11"><g fill="#8dc63f"><rect x=".3" y="0" width="5" height="3.300"/><rect x=".3" y="6.400" width="5" height="3.600"/><rect x="7.400" y="5.700" width="4.200" height="3.600"/></g><path d="M2.800 3.300v3.200M5.300 8h2.200" stroke="#8dc63f" stroke-width=".9" fill="none"/></svg>
<div class="w" id="content" style="left:483px;top:74.5px;width:1029px;height:640.5px;background:#fff">
</div>
<div class="t" style="left:508px;top:91px;font-size:17.5px;line-height:20px;color:#2e2e2e;letter-spacing:0.773px;-webkit-text-stroke:0.55px #2e2e2e;">Studentenfutter</div>
<div class="t" style="left:1415.0px;top:91px;font-size:9px;line-height:20px;color:#3a3a3a;letter-spacing:-1.303px;">DE</div>
<svg class="b" style="left:1440px;top:95px;" width="12.8" height="14.5" viewBox="0 0 12.8 14.5"><g fill="none" stroke="#222" stroke-width="1.300"><path d="M0 2.600h4.600M7.600 2.600h5.200M0 7.200h7M10 7.200h2.800M0 11.800h2.600M5.600 11.800h7.200"/><circle cx="6.100" cy="2.600" r="1.500"/><circle cx="8.500" cy="7.200" r="1.500"/><circle cx="4.100" cy="11.800" r="1.500"/></g></svg>
<div class="b" style="left:1464px;top:90px;width:23px;height:23px;background:#f3f3f3;border-radius:12px"></div>
<svg class="b" style="left:1470.5px;top:96.5px;" width="8" height="10" viewBox="0 0 8 10"><path d="M6 1L1.500 5 6 9" fill="none" stroke="#222" stroke-width="1.600"/></svg>
<div class="t" style="left:507.5px;top:126px;font-size:10px;line-height:20px;color:#3a3a3a;letter-spacing:-0.073px;">Eigenschaften</div>
<div class="t" style="left:589.2px;top:126px;font-size:10px;line-height:20px;color:#3a3a3a;letter-spacing:0.034px;">Stammdaten</div>
<div class="t" style="left:665.5px;top:126px;font-size:10px;line-height:20px;color:#3a3a3a;letter-spacing:0.137px;">Marketing</div>
<div class="b" style="left:483px;top:147px;width:1029px;height:1px;background:#e2e2e2"></div>
<div class="t" style="left:508.7px;top:161px;font-size:10px;line-height:20px;color:#3a3a3a;letter-spacing:0.173px;">Zutateneditor</div>
<div class="t" style="left:656px;top:161px;font-size:12.5px;line-height:20px;color:#333;font-weight:700;">Zutaten</div>
<div class="btn" style="left:648px;top:185.300px;width:120px;height:28.200px"></div>
<div class="t" style="left:657px;top:190px;font-size:10px;line-height:20px;color:#3a3a3a;">Hinzufügen</div>
<div class="t" style="left:656px;top:226px;font-size:10px;line-height:20px;color:#333;font-weight:700;">Typ</div>
<div class="t" style="left:687px;top:226px;font-size:10px;line-height:20px;color:#333;font-weight:700;">Zutat</div>
<div class="b" style="left:648px;top:252px;width:660px;height:27px;border:1px solid #cfcfcf;background:#f1f1f1"></div>
<div class="b" style="left:680px;top:252px;width:1px;height:27px;background:#cfcfcf"></div>
<svg class="b" style="left:650px;top:261.5px;" width="8.5" height="8.5" viewBox="0 0 8.5 8.5"><path d="M4.250 .4v7.700M.4 4.250h7.700" stroke="#444" stroke-width="2" fill="none"/></svg>
<svg class="b" style="left:657.5px;top:258.3px;" width="13" height="14" viewBox="0 0 13 14"><g fill="none" stroke="#8a8a8a" stroke-width=".75"><ellipse cx="6.500" cy="7" rx="2.300" ry="6"/><ellipse cx="6.500" cy="7" rx="2.300" ry="6" transform="rotate(60 6.500 7)"/><ellipse cx="6.500" cy="7" rx="2.300" ry="6" transform="rotate(120 6.500 7)"/><circle cx="6.500" cy="7" r="1.200"/></g></svg>
<div class="t" style="left:688px;top:257px;font-size:10px;line-height:20px;color:#3a3a3a;">106</div>
<div class="b" style="left:648px;top:278px;width:660px;height:27px;border:1px solid #cfcfcf;background:#f1f1f1"></div>
<div class="b" style="left:680px;top:278px;width:1px;height:27px;background:#cfcfcf"></div>
<svg class="b" style="left:650px;top:287.5px;" width="8.5" height="8.5" viewBox="0 0 8.5 8.5"><path d="M4.250 .4v7.700M.4 4.250h7.700" stroke="#444" stroke-width="2" fill="none"/></svg>
<svg class="b" style="left:657.5px;top:284.3px;" width="13" height="14" viewBox="0 0 13 14"><g fill="none" stroke="#8a8a8a" stroke-width=".75"><ellipse cx="6.500" cy="7" rx="2.300" ry="6"/><ellipse cx="6.500" cy="7" rx="2.300" ry="6" transform="rotate(60 6.500 7)"/><ellipse cx="6.500" cy="7" rx="2.300" ry="6" transform="rotate(120 6.500 7)"/><circle cx="6.500" cy="7" r="1.200"/></g></svg>
<div class="t" style="left:688px;top:283px;font-size:10px;line-height:20px;color:#3a3a3a;">073</div>
<div class="b" style="left:648px;top:304px;width:660px;height:27px;border:1px solid #cfcfcf;background:#f1f1f1"></div>
<div class="b" style="left:680px;top:304px;width:1px;height:27px;background:#cfcfcf"></div>
<svg class="b" style="left:650px;top:313.5px;" width="8.5" height="8.5" viewBox="0 0 8.5 8.5"><path d="M4.250 .4v7.700M.4 4.250h7.700" stroke="#444" stroke-width="2" fill="none"/></svg>
<svg class="b" style="left:657.5px;top:310.3px;" width="13" height="14" viewBox="0 0 13 14"><g fill="none" stroke="#8a8a8a" stroke-width=".75"><ellipse cx="6.500" cy="7" rx="2.300" ry="6"/><ellipse cx="6.500" cy="7" rx="2.300" ry="6" transform="rotate(60 6.500 7)"/><ellipse cx="6.500" cy="7" rx="2.300" ry="6" transform="rotate(120 6.500 7)"/><circle cx="6.500" cy="7" r="1.200"/></g></svg>
<div class="t" style="left:688px;top:309px;font-size:10px;line-height:20px;color:#3a3a3a;">130</div>
<div class="b" style="left:648px;top:330px;width:660px;height:27px;border:1px solid #cfcfcf;background:#f1f1f1"></div>
<div class="b" style="left:680px;top:330px;width:1px;height:27px;background:#cfcfcf"></div>
<svg class="b" style="left:650px;top:339.5px;" width="8.5" height="8.5" viewBox="0 0 8.5 8.5"><path d="M4.250 .4v7.700M.4 4.250h7.700" stroke="#444" stroke-width="2" fill="none"/></svg>
<svg class="b" style="left:657.5px;top:336.3px;" width="13" height="14" viewBox="0 0 13 14"><g fill="none" stroke="#8a8a8a" stroke-width=".75"><ellipse cx="6.500" cy="7" rx="2.300" ry="6"/><ellipse cx="6.500" cy="7" rx="2.300" ry="6" transform="rotate(60 6.500 7)"/><ellipse cx="6.500" cy="7" rx="2.300" ry="6" transform="rotate(120 6.500 7)"/><circle cx="6.500" cy="7" r="1.200"/></g></svg>
<div class="t" style="left:688px;top:335px;font-size:10px;line-height:20px;color:#3a3a3a;">099</div>
<div class="b" style="left:648px;top:356px;width:660px;height:27px;border:1px solid #cfcfcf;background:#f1f1f1"></div>
<div class="b" style="left:680px;top:356px;width:1px;height:27px;background:#cfcfcf"></div>
<svg class="b" style="left:650px;top:365.5px;" width="8.5" height="8.5" viewBox="0 0 8.5 8.5"><path d="M4.250 .4v7.700M.4 4.250h7.700" stroke="#444" stroke-width="2" fill="none"/></svg>
<svg class="b" style="left:657.5px;top:362.3px;" width="13" height="14" viewBox="0 0 13 14"><g fill="none" stroke="#8a8a8a" stroke-width=".75"><ellipse cx="6.500" cy="7" rx="2.300" ry="6"/><ellipse cx="6.500" cy="7" rx="2.300" ry="6" transform="rotate(60 6.500 7)"/><ellipse cx="6.500" cy="7" rx="2.300" ry="6" transform="rotate(120 6.500 7)"/><circle cx="6.500" cy="7" r="1.200"/></g></svg>
<div class="t" style="left:688px;top:361px;font-size:10px;line-height:20px;color:#3a3a3a;">163</div>
<div class="t" style="left:656px;top:408px;font-size:12.5px;line-height:20px;color:#333;font-weight:700;">Zutatengruppen</div>
<div class="btn" style="left:648px;top:432.500px;width:120px;height:28px"></div>
<div class="t" style="left:657px;top:437px;font-size:10px;line-height:20px;color:#3a3a3a;">Hinzufügen</div>
<div class="t" style="left:656px;top:472px;font-size:10px;line-height:20px;color:#333;font-weight:700;">Bezeichnung</div>
<div class="t" style="left:1265.2px;top:472px;font-size:10px;line-height:20px;color:#333;font-weight:700;">QUID anzeigen</div>
<div class="t" style="left:1352.2px;top:472px;font-size:10px;line-height:20px;color:#333;font-weight:700;letter-spacing:-0.1px;">Gruppenname anzeigen</div>
<div class="b" style="left:648px;top:498.7px;width:823px;height:116px;background:#bac6e5"></div>
<div class="b" style="left:1343px;top:498.7px;width:1px;height:116px;background:#adb9d8"></div>
<div class="b" style="left:1254px;top:498.7px;width:1px;height:116px;background:#adb9d8"></div>
<div class="t" style="left:657px;top:506px;font-size:10px;line-height:20px;color:#fff;">Nusskernmischung</div>
<svg class="b" style="left:1403px;top:510px;" width="10" height="11" viewBox="0 0 10 11"><path d="M1 6.200l2.600 3.300L8.800 1" fill="none" stroke="#fff" stroke-width="1.300"/></svg>
<div class="t" style="left:508.7px;top:626px;font-size:10px;line-height:20px;color:#3a3a3a;letter-spacing:0.073px;">Zutatenliste</div>
<div class="t" style="left:648px;top:626px;font-size:10px;line-height:20px;color:#3a3a3a"><span style="letter-spacing:-0.003px">Zutaten: Nusskernmischung (veränderliche Gewichtsanteile) 94,8 % (Weinbeeren getrocknet; blanchierte </span><span style="letter-spacing:-0.133px"><b>Mandeln</b>; <b>Cashewkerne</b>; <b>Walnusskerne</b>; <b>Haselnusskerne</b>), Sonnenblumenöl</span></div>
<div class="t" style="left:508.7px;top:658px;font-size:10px;line-height:20px;color:#3a3a3a;letter-spacing:0.186px;">Nährwerteeditor</div>
<div class="btn" style="left:648px;top:656.250px;width:133.75px;height:28.250px"></div>
<div class="t" style="left:657.2px;top:661px;font-size:10px;line-height:20px;color:#3a3a3a;letter-spacing:0.013px;">Berechnete Werte fixieren</div>
<div class="btn" style="left:787.4px;top:656.250px;width:159.6px;height:28.250px"></div>
<div class="t" style="left:796.25px;top:661px;font-size:10px;line-height:20px;color:#3a3a3a;letter-spacing:-0.064px;">Angepasste Werte zurücksetzen</div>
<div class="btn" style="left:953.2px;top:656.250px;width:83px;height:28.250px"></div>
<div class="t" style="left:962px;top:661px;font-size:10px;line-height:20px;color:#3a3a3a;letter-spacing:-0.301px;">Exportiere CSV</div>
<div class="btn" style="left:1041.2px;top:656.250px;width:85.5px;height:28.250px"></div>
<div class="t" style="left:1050.5px;top:661px;font-size:10px;line-height:20px;color:#3a3a3a;letter-spacing:-0.066px;">Importiere CSV</div>
<div class="t" style="left:1390.7px;top:688px;font-size:10px;line-height:20px;color:#3a3a3a;letter-spacing:-0.477px;">Suche:</div>
<div class="inp" style="left:1268px;top:707.500px;width:153.500px;height:20px"></div>
<div class="b" style="left:1462px;top:670px;width:6.5px;height:33px;background:#777;border-radius:3.250px"></div>
<svg class="b" style="left:1461px;top:660px;" width="8" height="6" viewBox="0 0 8 6"><path d="M.3 5.500L4 .5l3.700 5z" fill="#777"/></svg>
<div class="b" style="left:1499.2px;top:162px;width:6.3px;height:193.5px;background:#8a8a8a;border-radius:3.150px"></div>
<svg class="b" style="left:1498.3px;top:152.5px;" width="8" height="6" viewBox="0 0 8 6"><path d="M.3 5.500L4 .5l3.700 5z" fill="#8a8a8a"/></svg>
<svg class="b" style="left:1498.3px;top:711.5px;" width="8" height="6" viewBox="0 0 8 6"><path d="M.3 .5L4 5.500 7.700 .5z" fill="#8a8a8a"/></svg>
<div class="w" id="overlay" style="left:483px;top:74.5px;width:1029px;height:640.5px"><div class="b" style="left:0;top:-74.5px;width:1029px;height:715px;background:radial-gradient(ellipse farthest-corner at 50% 50%, rgba(0,0,0,.3) 0%, rgba(0,0,0,.7) 100%)"></div><div class="b" style="left:0;top:0;width:1px;height:641px;background:rgba(0,0,0,.25)"></div></div>
<div class="b" id="modal" style="left:691px;top:115.500px;width:613px;height:494px;border-radius:5px;background:#fcfcfc;box-shadow:0 5px 17px rgba(0,0,0,.55);overflow:hidden">
<div class="b" style="left:0;top:0;width:613px;height:41px;background:#e9eaeb;border-bottom:1px solid #d6d6d6"></div>
<div class="b" style="left:0;top:453.500px;width:613px;height:41px;background:#e9eaeb;border-top:1px solid #d6d6d6"></div>
</div>
<div class="t" style="left:703.5px;top:126px;font-size:10px;line-height:20px;color:#3a3a3a;">Bearbeiten</div>
<svg class="b" style="left:1280.5px;top:135.5px;" width="8" height="8" viewBox="0 0 8 8"><path d="M.8 .8l6.400 6.400M7.200 .8L.8 7.200" stroke="#444" stroke-width="1.300" fill="none"/></svg>
<div class="t" style="left:760.7px;top:171px;font-size:10px;line-height:20px;color:#3a3a3a;letter-spacing:-0.1px;">Bezeichnung</div>
<div class="inp" style="left:921px;top:171px;width:313px;height:23.500px"></div>
<div class="t" style="left:925.5px;top:174px;font-size:10px;line-height:20px;color:#3a3a3a;letter-spacing:0.024px;">Nusskernmischung (veränderliche Gewichtsanteile)</div>
<div class="b" style="left:924.200px;top:208.700px;width:10.600px;height:10.600px;border:1px solid #8a8a8a;border-radius:2.5px;background:#fff"></div>
<div class="t" style="left:944.5px;top:205px;font-size:10px;line-height:20px;color:#3a3a3a;">sprachabhängig</div>
<div class="t" style="left:760.7px;top:232px;font-size:10px;line-height:20px;color:#3a3a3a;">QUID</div>
<div class="inp" style="left:921px;top:232.300px;width:313px;height:29.200px"></div>
<div class="t" style="left:925.5px;top:238px;font-size:9px;line-height:20px;color:#3a3a3a;">Ja</div>
<div class="t" style="left:760.7px;top:272px;font-size:10px;line-height:20px;color:#8a8a8a;">Gruppenname anzeigen</div>
<div class="inp" style="left:921px;top:272.800px;width:313px;height:29.200px;border-color:#cfcfcf"></div>
<div class="t" style="left:925.5px;top:279px;font-size:9px;line-height:20px;color:#999;">Ja</div>
<div class="t" style="left:921.7px;top:301px;font-size:9.3px;line-height:20px;color:#3a3a3a;letter-spacing:0.019px;">Nur verfügbar, wenn nur eine einzigartige Zutat gewählt ist</div>
<div class="t" style="left:760.7px;top:324px;font-size:10px;line-height:20px;color:#3a3a3a;letter-spacing:0.082px;">Unterzutaten in Zutatenliste</div>
<div class="t" style="left:760.7px;top:337px;font-size:10px;line-height:20px;color:#3a3a3a;letter-spacing:-0.056px;">anzeigen</div>
<div class="inp" style="left:921px;top:325.300px;width:313px;height:29.200px"></div>
<div class="t" style="left:925.5px;top:331px;font-size:9px;line-height:20px;color:#3a3a3a;">Ja</div>
<div class="inp" style="left:921px;top:365.0px;width:313px;height:27.600px;border-color:#d4d4d4;box-shadow:none"></div>
<div class="tag" style="left:926.200px;top:370.0px;width:70.5px;height:18.300px"></div>
<div class="t" style="left:932px;top:370px;font-size:10px;line-height:20px;color:#2c2c2c;letter-spacing:-0.184px;">Cashewkerne</div>
<div class="t" style="left:760.7px;top:365px;font-size:10px;line-height:20px;color:#3a3a3a;letter-spacing:-0.06px;">106 Cashewkerne für Mischungen</div>
<div class="inp" style="left:921px;top:402.75px;width:313px;height:27.600px;border-color:#d4d4d4;box-shadow:none"></div>
<div class="tag" style="left:926.200px;top:407.75px;width:73.75px;height:18.300px"></div>
<div class="t" style="left:932px;top:408px;font-size:10px;line-height:20px;color:#2c2c2c;letter-spacing:-0.04px;">Walnusskerne</div>
<div class="t" style="left:760.7px;top:403px;font-size:10px;line-height:20px;color:#3a3a3a;letter-spacing:-0.147px;">130 Walnusskerne</div>
<div class="inp" style="left:921px;top:440.5px;width:313px;height:27.600px;border-color:#d4d4d4;box-shadow:none"></div>
<div class="tag" style="left:926.200px;top:445.5px;width:115.5px;height:18.300px"></div>
<div class="t" style="left:932px;top:446px;font-size:10px;line-height:20px;color:#2c2c2c;letter-spacing:0.054px;">Weinbeeren getrocknet</div>
<div class="t" style="left:760.7px;top:440px;font-size:10px;line-height:20px;color:#3a3a3a;letter-spacing:-0.112px;">163 Weinbeeren</div>
<div class="inp" style="left:921px;top:478.25px;width:313px;height:27.600px;border-color:#d4d4d4;box-shadow:none"></div>
<div class="tag" style="left:926.200px;top:483.25px;width:103px;height:18.300px"></div>
<div class="t" style="left:932px;top:483px;font-size:10px;line-height:20px;color:#2c2c2c;letter-spacing:0.035px;">Blanchierte Mandeln</div>
<div class="t" style="left:760.7px;top:478px;font-size:10px;line-height:20px;color:#3a3a3a;letter-spacing:0.026px;">073 Mandeln blanchiert</div>
<div class="inp" style="left:921px;top:516.0px;width:313px;height:27.600px;border-color:#d4d4d4;box-shadow:none"></div>
<div class="tag" style="left:926.200px;top:521.0px;width:81.75px;height:18.300px"></div>
<div class="t" style="left:932px;top:521px;font-size:10px;line-height:20px;color:#2c2c2c;letter-spacing:-0.089px;">Haselnusskerne</div>
<div class="t" style="left:760.7px;top:516px;font-size:10px;line-height:20px;color:#3a3a3a;letter-spacing:-0.077px;">099 Haselnusskerne für</div>
<div class="t" style="left:760.7px;top:529px;font-size:10px;line-height:20px;color:#3a3a3a;letter-spacing:0.037px;">Mischungen</div>
<div class="b" style="left:1219px;top:577.500px;width:77.500px;height:28.300px;border:1px solid #9a9a9a;border-radius:2px;background:linear-gradient(#ffffff,#ededed);box-shadow:0 1px 1px rgba(0,0,0,.1)"></div>
<div class="t" style="left:1230.7px;top:582px;font-size:12px;line-height:20px;color:#2a2a2a;font-weight:700;letter-spacing:-0.62px;">Speichern</div>
</body></html>
